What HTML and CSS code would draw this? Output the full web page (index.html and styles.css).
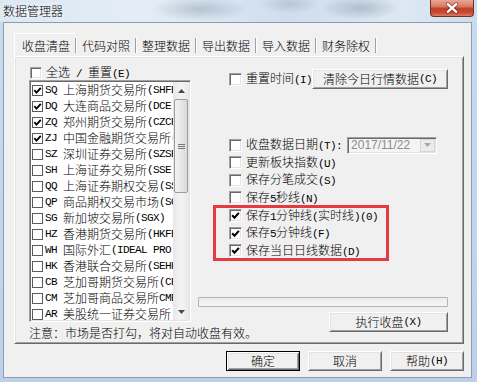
FILE: index.html
```html
<!DOCTYPE html>
<html>
<head>
<meta charset="utf-8">
<title>数据管理器</title>
<link rel="stylesheet" href="styles.css">
</head>
<body>
<div class="win">
  <div class="titlebar">
    <span class="title">数据管理器</span>
    <div class="close">
      <svg width="44" height="16" viewBox="0 0 44 16"><path d="M17.5 4 L26.5 12 M26.5 4 L17.5 12" stroke="#4a2018" stroke-width="4.2" stroke-linecap="round" opacity="0.5" fill="none"/><path d="M17.5 4 L26.5 12 M26.5 4 L17.5 12" stroke="#fff" stroke-width="2.3" stroke-linecap="round" fill="none"/></svg>
    </div>
  </div>
  <div class="client">
    <div class="tabs">
      <div class="tab sel">收盘清盘</div><i class="sep"></i>
      <div class="tab">代码对照</div><i class="sep"></i>
      <div class="tab">整理数据</div><i class="sep"></i>
      <div class="tab">导出数据</div><i class="sep"></i>
      <div class="tab">导入数据</div><i class="sep"></i>
      <div class="tab">财务除权</div><i class="sep"></i>
    </div>
    <div class="panel">
      <div class="lcol">
        <div class="allrow"><span class="cb"></span><span class="lbl">全选<span class="a"> / </span>重置<span class="a">(E)</span></span></div>
        <div class="list">
          <div class="rows">
            <div class="row"><span class="lcb"><svg width="9" height="9" viewBox="0 0 9 9"><path d="M1.3 4.2 L3.5 6.6 L7.8 1.8" stroke="#000" stroke-width="1.9" fill="none"/></svg></span><span class="a">SQ </span>上海期货交易所<span class="a">(SHFE)</span></div>
            <div class="row"><span class="lcb"><svg width="9" height="9" viewBox="0 0 9 9"><path d="M1.3 4.2 L3.5 6.6 L7.8 1.8" stroke="#000" stroke-width="1.9" fill="none"/></svg></span><span class="a">DQ </span>大连商品交易所<span class="a">(DCE)</span></div>
            <div class="row"><span class="lcb"><svg width="9" height="9" viewBox="0 0 9 9"><path d="M1.3 4.2 L3.5 6.6 L7.8 1.8" stroke="#000" stroke-width="1.9" fill="none"/></svg></span><span class="a">ZQ </span>郑州期货交易所<span class="a">(CZCE)</span></div>
            <div class="row"><span class="lcb"><svg width="9" height="9" viewBox="0 0 9 9"><path d="M1.3 4.2 L3.5 6.6 L7.8 1.8" stroke="#000" stroke-width="1.9" fill="none"/></svg></span><span class="a">ZJ </span>中国金融期货交易所<span class="a">(CFFEX)</span></div>
            <div class="row"><span class="lcb"></span><span class="a">SZ </span>深圳证券交易所<span class="a">(SZSE)</span></div>
            <div class="row"><span class="lcb"></span><span class="a">SH </span>上海证券交易所<span class="a">(SSE)</span></div>
            <div class="row"><span class="lcb"></span><span class="a">QQ </span>上海证券期权交易<span class="a">(SSEO)</span></div>
            <div class="row"><span class="lcb"></span><span class="a">QP </span>商品期权交易市场<span class="a">(SQO)</span></div>
            <div class="row"><span class="lcb"></span><span class="a">SG </span>新加坡交易所<span class="a">(SGX)</span></div>
            <div class="row"><span class="lcb"></span><span class="a">HZ </span>香港期货交易所<span class="a">(HKFE)</span></div>
            <div class="row"><span class="lcb"></span><span class="a">WH </span>国际外汇<span class="a">(IDEAL PRO)</span></div>
            <div class="row"><span class="lcb"></span><span class="a">HK </span>香港联合交易所<span class="a">(SEHK)</span></div>
            <div class="row"><span class="lcb"></span><span class="a">CB </span>芝加哥期货交易所<span class="a">(CBOT)</span></div>
            <div class="row"><span class="lcb"></span><span class="a">CM </span>芝加哥商品交易所<span class="a">CME</span></div>
            <div class="row"><span class="lcb"></span><span class="a">AR </span>美股统一证券交易所</div>
          </div>
          <div class="sb">
            <div class="sbbtn"><svg width="7" height="4" viewBox="0 0 7 4"><polygon points="0,4 3.5,0 7,4" fill="#4a4a4a"/></svg></div>
            <div class="thumb"><span class="grip"></span></div>
            <div class="track"></div>
            <div class="sbbtn"><svg width="7" height="4" viewBox="0 0 7 4"><polygon points="0,0 3.5,4 7,0" fill="#4a4a4a"/></svg></div>
          </div>
        </div>
        <div class="note">注意：市场是否打勾，将对自动收盘有效。</div>
      </div>
      <div class="rcol">
        <div class="r1">
          <span class="cb"></span><span class="lbl">重置时间<span class="a">(I)</span></span>
          <div class="btn wide">清除今日行情数据<span class="a">(C)</span></div>
        </div>
        <div class="rdate">
          <span class="cb"></span><span class="lbl">收盘数据日期<span class="a">(T):</span></span>
          <div class="combo"><span class="ctext">2017/11/22</span><span class="cbtn"><svg width="7" height="4" viewBox="0 0 7 4"><polygon points="0,0 3.5,4 7,0" fill="#a8a8a8"/></svg></span></div>
        </div>
        <div class="crow"><span class="cb"></span><span class="lbl">更新板块指数<span class="a">(U)</span></span></div>
        <div class="crow"><span class="cb"></span><span class="lbl">保存分笔成交<span class="a">(S)</span></span></div>
        <div class="crow"><span class="cb"></span><span class="lbl">保存<span class="a">5</span>秒线<span class="a">(N)</span></span></div>
        <div class="hl">
          <div class="crow"><span class="cb"><svg width="9" height="9" viewBox="0 0 9 9"><path d="M1.2 4.2 L3.5 6.7 L7.9 1.8" stroke="#000" stroke-width="2" fill="none"/></svg></span><span class="lbl">保存<span class="a">1</span>分钟线<span class="a">(</span>实时线<span class="a">)(0)</span></span></div>
          <div class="crow"><span class="cb"><svg width="9" height="9" viewBox="0 0 9 9"><path d="M1.2 4.2 L3.5 6.7 L7.9 1.8" stroke="#000" stroke-width="2" fill="none"/></svg></span><span class="lbl">保存<span class="a">5</span>分钟线<span class="a">(F)</span></span></div>
          <div class="crow"><span class="cb"><svg width="9" height="9" viewBox="0 0 9 9"><path d="M1.2 4.2 L3.5 6.7 L7.9 1.8" stroke="#000" stroke-width="2" fill="none"/></svg></span><span class="lbl">保存当日日线数据<span class="a">(D)</span></span></div>
        </div>
        <div class="progress"></div>
        <div class="btn exec">执行收盘<span class="a">(X)</span></div>
      </div>
    </div>
    <div class="footer">
      <div class="btn fb def">确定</div>
      <div class="btn fb">取消</div>
      <div class="btn fb">帮助<span class="a">(H)</span></div>
    </div>
  </div>
</div>
</body>
</html>
```
FILE: styles.css
```css
* { box-sizing: border-box; }
html, body { margin: 0; padding: 0; }
body {
  width: 477px;
  height: 382px;
  overflow: hidden;
  font-family: "Noto Sans CJK SC", "Noto Sans CJK JP", sans-serif;
  font-size: 12px;
  font-weight: 300;
  line-height: 16px;
  color: #000;
  background: #c2d6ec;
}
.a {
  font-family: "Liberation Mono", monospace;
  font-size: 11px;
  font-weight: 400;
  letter-spacing: -0.6px;
  white-space: pre;
}
.win {
  width: 477px;
  height: 382px;
  display: flex;
  flex-direction: column;
  background: linear-gradient(#c9dbef, #bcd1e9);
}
.titlebar {
  height: 22px;
  flex: none;
  display: flex;
  align-items: flex-start;
  background:
    radial-gradient(ellipse 48px 12px at 200px 9px, rgba(110,130,150,0.35), rgba(110,130,150,0)),
    radial-gradient(ellipse 30px 10px at 290px 4px, rgba(110,130,150,0.25), rgba(110,130,150,0)),
    radial-gradient(ellipse 40px 12px at 360px 8px, rgba(100,120,140,0.35), rgba(100,120,140,0)),
    linear-gradient(to right, #dbe7f3, #e4edf6 30%, #cfdeed 60%, #dde8f3 85%, #cbdcee);
}
.title {
  padding: 3px 0 0 3px;
  text-shadow: 0 0 4px #fff, 0 0 8px #fff;
}
.close {
  margin-left: auto;
  margin-right: 3px;
  width: 44px;
  height: 17px;
  border: 1px solid #6f3226;
  border-top: none;
  border-radius: 0 0 4px 4px;
  background: linear-gradient(#e7a794 0%, #d77d66 40%, #c3412a 52%, #c9472f 78%, #dd7c60 100%);
  display: flex;
  align-items: center;
  justify-content: center;
}
.close svg { display: block; }
.client {
  flex: 1;
  margin: 0 5px 4px 3px;
  border: 1px solid #8a9db3;
  background: #f0f0f0;
  padding: 10px 7px 0 10px;
  display: flex;
  flex-direction: column;
}
.tabs {
  height: 23px;
  display: flex;
  align-items: flex-start;
  padding-left: 3px;
}
.tab {
  height: 23px;
  padding: 5px 5px 0;
  white-space: nowrap;
}
.tab.sel {
  margin-left: -3px;
  padding-left: 8px;
  box-shadow: inset 1px 1px #fff;
}
.sep {
  display: block;
  width: 2px;
  height: 15px;
  margin-top: 5px;
  border-left: 1px solid #a0a0a0;
  border-right: 1px solid #fff;
}
.panel {
  height: 288px;
  border: 1px solid;
  border-color: #fff #696969 #696969 #fff;
  box-shadow: inset 1px 1px #e3e3e3, inset -1px -1px #a0a0a0;
  padding: 9px 0 0 14px;
  display: flex;
  gap: 7px;
}
.lcol {
  width: 162px;
  flex: none;
  display: flex;
  flex-direction: column;
}
.allrow {
  height: 14px;
  display: flex;
  align-items: center;
  padding-left: 1px;
}
.cb {
  width: 13px;
  height: 13px;
  flex: none;
  border: 1px solid;
  border-color: #a0a0a0 #fff #fff #a0a0a0;
  box-shadow: inset 1px 1px #696969, inset -1px -1px #e3e3e3;
  background: #fff;
  display: flex;
  align-items: center;
  justify-content: center;
}
.allrow .cb { width: 12px; height: 12px; }
.cb svg, .lcb svg { display: block; }
.lbl {
  margin-left: 4px;
  white-space: nowrap;
}
.list {
  height: 242px;
  border: 1px solid;
  border-color: #a0a0a0 #fff #fff #a0a0a0;
  box-shadow: inset 1px 1px #696969, inset -1px -1px #e3e3e3;
  background: #fff;
  padding: 1px;
  display: flex;
  overflow: hidden;
}
.rows {
  flex: 1;
  min-width: 0;
  overflow: hidden;
}
.row {
  height: 16px;
  display: flex;
  align-items: center;
  white-space: nowrap;
  overflow: hidden;
}
.lcb {
  width: 11px;
  height: 11px;
  flex: none;
  margin: 0 2px 0 1px;
  border: 1px solid #5a5a5a;
  background: #fff;
}
.sb {
  width: 16px;
  flex: none;
  display: flex;
  flex-direction: column;
  background: linear-gradient(to right, #e6e6e6, #f2f2f2 40%, #f2f2f2 60%, #e8e8e8);
}
.sbbtn {
  height: 17px;
  flex: none;
  display: flex;
  align-items: center;
  justify-content: center;
}
.thumb {
  height: 94px;
  flex: none;
  margin: 0 1px;
  border: 1px solid #9b9b9b;
  border-radius: 2px;
  background: linear-gradient(to right, #f3f3f3, #e8e8e8 50%, #d9d9d9);
  display: flex;
  align-items: center;
  justify-content: center;
}
.grip {
  width: 7px;
  height: 5px;
  background: linear-gradient(#777 0 1px, transparent 1px 2px, #777 2px 3px, transparent 3px 4px, #777 4px 5px);
}
.track { flex: 1; }
.note {
  margin-top: 4px;
  height: 14px;
  line-height: 14px;
  white-space: nowrap;
}
.rcol {
  width: 250px;
  flex: none;
  display: flex;
  flex-direction: column;
}
.r1 {
  margin-top: 3px;
  height: 20px;
  display: flex;
  align-items: center;
  padding-left: 31px;
}
.btn {
  height: 20px;
  border: 1px solid;
  border-color: #fff #696969 #696969 #fff;
  box-shadow: inset 1px 1px #e3e3e3, inset -1px -1px #a0a0a0;
  background: #f0f0f0;
  display: flex;
  align-items: center;
  justify-content: center;
  white-space: nowrap;
}
.btn.wide { margin-left: auto; width: 138px; }
.rdate {
  margin-top: 47px;
  height: 18px;
  display: flex;
  align-items: center;
  padding-left: 31px;
}
.combo {
  margin-left: 5px;
  width: 90px;
  height: 17px;
  border: 1px solid;
  border-color: #a0a0a0 #fff #fff #a0a0a0;
  box-shadow: inset 1px 1px #696969, inset -1px -1px #e3e3e3;
  background: #f4f4f4;
  padding: 1px;
  display: flex;
  align-items: center;
}
.ctext {
  flex: 1;
  padding-left: 2px;
  font-family: "Liberation Sans", sans-serif;
  font-size: 12px;
  font-weight: 400;
  color: #8c8c8c;
}
.cbtn {
  width: 15px;
  height: 13px;
  border: 1px solid #d6d6d6;
  background: #ececec;
  display: flex;
  align-items: center;
  justify-content: center;
}
.crow {
  height: 17.6px;
  display: flex;
  align-items: center;
  padding-left: 31px;
}
.hl { position: relative; }
.hl::after {
  content: "";
  position: absolute;
  left: 15px;
  right: 59px;
  top: -2px;
  bottom: -1px;
  border: 3px solid #e33b40;
}
.progress {
  margin-top: 37.4px;
  height: 10px;
  border: 1px solid #b4b4b4;
  border-radius: 1px;
  background: linear-gradient(#ececec, #f5f5f5);
}
.btn.exec {
  margin-top: 5px;
  width: 119px;
  align-self: flex-end;
}
.footer {
  margin-top: 7px;
  display: flex;
  justify-content: flex-end;
  gap: 8px;
}
.btn.fb { width: 74px; }
.btn.def {
  border-color: #000;
  box-shadow: inset 1px 1px #fff, inset -1px -1px #696969, inset 2px 2px #e3e3e3, inset -2px -2px #a0a0a0;
}
```
